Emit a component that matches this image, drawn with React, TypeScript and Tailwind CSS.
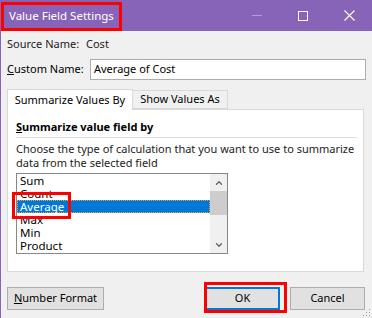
import { ChevronUp, ChevronDown } from "lucide-react";

const items = ["Sum", "Count", "Average", "Max", "Min", "Product"];

export default function App() {
  return (
    <div className="relative flex h-[318px] w-[372px] flex-col overflow-hidden border-l border-[#8764b8] bg-[#f0f0f0] font-['Noto_Sans',sans-serif] text-[11px] whitespace-nowrap text-black">
      {/* title bar */}
      <div className="flex h-[31px] shrink-0 items-center bg-[#8764b8] text-white">
        <span className="ml-[8px] text-[11.5px]">Value Field Settings</span>
        <div className="ml-auto flex h-full items-center">
          <div className="flex w-[46px] justify-center">
            <div className="h-px w-[10px] bg-[#b49bd6]" />
          </div>
          <div className="flex w-[46px] justify-center">
            <div className="h-[10px] w-[10px] border border-white" />
          </div>
          <div className="flex w-[46px] justify-center">
            <svg width="11" height="11" viewBox="0 0 11 11" stroke="white" strokeWidth="1.1">
              <path d="M0.5 0.5 L10.5 10.5 M10.5 0.5 L0.5 10.5" />
            </svg>
          </div>
        </div>
      </div>

      <div className="flex flex-1 flex-col px-[6px]">
        <div className="mt-[5px] flex h-[16px] items-center text-[#222]">
          <span className="w-[79px]">Source Name:</span>
          <span>Cost</span>
        </div>

        <div className="mt-[7px] flex h-[21px] items-center">
          <span className="w-[83px]">
            <span className="underline">C</span>ustom Name:
          </span>
          <div className="flex h-[21px] w-[276px] items-center border border-[#adadad] bg-white px-[3px]">
            Average of Cost
          </div>
        </div>

        {/* tabs */}
        <div className="mt-[8px] flex h-[21px] items-end">
          <div className="relative z-10 -mb-px flex h-[21px] w-[126px] items-center justify-center border border-b-0 border-[#d9d9d9] bg-white">
            Summarize Values By
          </div>
          <div className="flex h-[19px] w-[95px] items-center justify-center border border-l-0 border-[#d9d9d9] bg-[#f0f0f0]">
            Show Values As
          </div>
        </div>

        <div className="flex h-[163px] w-[357px] flex-col border border-[#d9d9d9] bg-white px-[8px]">
          <div className="mt-[10px] font-bold leading-[14px]">
            <span className="underline">S</span>ummarize value field by
          </div>
          <div className="mt-[3px] h-px w-[341px] bg-[#dcdcdc]" />
          <p className="mt-[4px] leading-[14px] text-[#222]">
            Choose the type of calculation that you want to use to summarize
            <br />
            data from the selected field
          </p>

          <div className="mt-[3px] flex h-[81px] w-[212px] border border-[#828790] bg-white">
            <div className="flex flex-1 flex-col">
              {items.map((it) => (
                <div
                  key={it}
                  className={
                    it === "Average"
                      ? "flex h-[13px] items-center border border-dotted border-[#f7a03a] bg-[#0078d7] pl-[2px] text-[11.5px] leading-[13px] text-white"
                      : "flex h-[13px] items-center pl-[3px] text-[11.5px] leading-[13px]"
                  }
                >
                  {it}
                </div>
              ))}
            </div>
            <div className="flex w-[17px] flex-col bg-[#f0f0f0]">
              <div className="flex h-[17px] items-center justify-center text-[#606060]">
                <ChevronUp size={10} strokeWidth={3} />
              </div>
              <div className="h-[24px] bg-[#cdcdcd]" />
              <div className="flex-1" />
              <div className="flex h-[17px] items-center justify-center text-[#606060]">
                <ChevronDown size={10} strokeWidth={3} />
              </div>
            </div>
          </div>
        </div>

        {/* buttons */}
        <div className="mt-[15px] flex items-center">
          <button className="flex h-[23px] w-[97px] items-center justify-center border border-[#adadad] bg-[#e1e1e1]">
            <span className="underline">N</span>umber Format
          </button>
          <button className="ml-auto flex h-[23px] w-[75px] items-center justify-center border-2 border-[#0078d7] bg-[#e1e1e1]">
            OK
          </button>
          <button className="ml-[10px] mr-[1px] flex h-[23px] w-[75px] items-center justify-center border border-[#adadad] bg-[#e1e1e1]">
            Cancel
          </button>
        </div>
      </div>

      {/* resize grip */}
      <svg className="absolute bottom-[1px] right-[1px]" width="10" height="10" viewBox="0 0 10 10" fill="#a0a0a0">
        <rect x="8" y="2" width="1" height="1" />
        <rect x="5" y="5" width="1" height="1" />
        <rect x="8" y="5" width="1" height="1" />
        <rect x="2" y="8" width="1" height="1" />
        <rect x="5" y="8" width="1" height="1" />
        <rect x="8" y="8" width="1" height="1" />
      </svg>

      {/* red annotation boxes */}
      <div className="absolute left-0 top-[2px] h-[29px] w-[121px] border-[3px] border-[#ff0000]" />
      <div className="absolute left-[11px] top-[192px] h-[27px] w-[59px] border-[3px] border-[#ff0000]" />
      <div className="absolute left-[203px] top-[282px] h-[31px] w-[83px] border-[3px] border-[#ff0000]" />
    </div>
  );
}
